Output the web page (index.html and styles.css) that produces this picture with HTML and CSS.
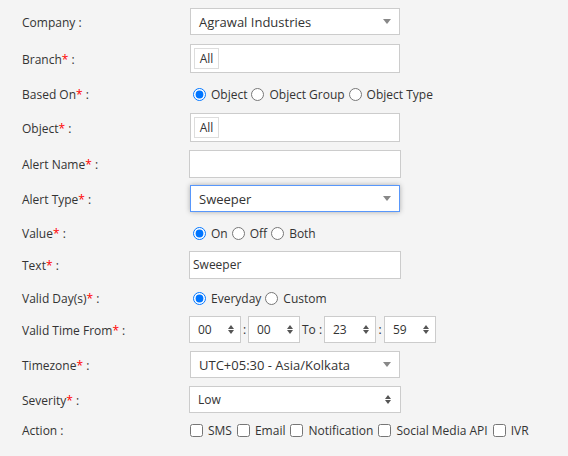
FILE: index.html
```html
<!DOCTYPE html>
<html>
<head>
<meta charset="utf-8">
<link rel="stylesheet" href="styles.css">
</head>
<body>
<div class="form">
  <div class="row h27 mt8">
    <div class="lbl">Company :</div>
    <div class="s2"><span>Agrawal Industries</span><svg class="caret" width="8" height="5" viewBox="0 0 8 5"><polygon points="0,0 8,0 4,5"/></svg></div>
  </div>
  <div class="row h29 mt9">
    <div class="lbl">Branch<span class="req">*</span> :</div>
    <div class="tagbox"><span class="tag">All</span></div>
  </div>
  <div class="row h26 mt8">
    <div class="lbl">Based On<span class="req">*</span> :</div>
    <div class="opts radios">
      <input type="radio" name="b" checked><span class="opt">Object</span>
      <input type="radio" name="b"><span class="opt">Object Group</span>
      <input type="radio" name="b"><span class="opt">Object Type</span>
    </div>
  </div>
  <div class="row h29 mt6">
    <div class="lbl">Object<span class="req">*</span> :</div>
    <div class="tagbox"><span class="tag">All</span></div>
  </div>
  <div class="row h27 mt8">
    <div class="lbl">Alert Name<span class="req">*</span> :</div>
    <div class="inp"></div>
  </div>
  <div class="row h27 mt8">
    <div class="lbl">Alert Type<span class="req">*</span> :</div>
    <div class="s2 focus"><span>Sweeper</span><svg class="caret" width="8" height="5" viewBox="0 0 8 5"><polygon points="0,0 8,0 4,5"/></svg></div>
  </div>
  <div class="row h26 mt8">
    <div class="lbl">Value<span class="req">*</span> :</div>
    <div class="opts radios">
      <input type="radio" name="v" checked><span class="opt">On</span>
      <input type="radio" name="v"><span class="opt">Off</span>
      <input type="radio" name="v"><span class="opt">Both</span>
    </div>
  </div>
  <div class="row h27 mt5">
    <div class="lbl">Text<span class="req">*</span> :</div>
    <div class="inp">Sweeper</div>
  </div>
  <div class="row h26 mt7">
    <div class="lbl">Valid Day(s)<span class="req">*</span> :</div>
    <div class="opts radios">
      <input type="radio" name="d" checked><span class="opt">Everyday</span>
      <input type="radio" name="d"><span class="opt">Custom</span>
    </div>
  </div>
  <div class="row h27 mt5">
    <div class="lbl">Valid Time From<span class="req">*</span> :</div>
    <div class="time">
      <div class="nsel tsel"><span>00</span><svg class="spin" width="6" height="9" viewBox="0 0 6 9"><polygon points="0,4 3,0 6,4"/><polygon points="0,5 6,5 3,9"/></svg></div>
      <span class="sep">:</span>
      <div class="nsel tsel"><span>00</span><svg class="spin" width="6" height="9" viewBox="0 0 6 9"><polygon points="0,4 3,0 6,4"/><polygon points="0,5 6,5 3,9"/></svg></div>
      <span class="to">To :</span>
      <div class="nsel tsel"><span>23</span><svg class="spin" width="6" height="9" viewBox="0 0 6 9"><polygon points="0,4 3,0 6,4"/><polygon points="0,5 6,5 3,9"/></svg></div>
      <span class="sep sep2">:</span>
      <div class="nsel tsel"><span>59</span><svg class="spin" width="6" height="9" viewBox="0 0 6 9"><polygon points="0,4 3,0 6,4"/><polygon points="0,5 6,5 3,9"/></svg></div>
    </div>
  </div>
  <div class="row h27 mt8">
    <div class="lbl">Timezone<span class="req">*</span> :</div>
    <div class="s2"><span>UTC+05:30 - Asia/Kolkata</span><svg class="caret" width="8" height="5" viewBox="0 0 8 5"><polygon points="0,0 8,0 4,5"/></svg></div>
  </div>
  <div class="row h27 mt8">
    <div class="lbl">Severity<span class="req">*</span> :</div>
    <div class="nsel wide"><span>Low</span><svg class="spin" width="6" height="9" viewBox="0 0 6 9"><polygon points="0,4 3,0 6,4"/><polygon points="0,5 6,5 3,9"/></svg></div>
  </div>
  <div class="row h26 mt4">
    <div class="lbl">Action :</div>
    <div class="opts checks">
      <input type="checkbox"><span class="opt">SMS</span>
      <input type="checkbox"><span class="opt">Email</span>
      <input type="checkbox"><span class="opt">Notification</span>
      <input type="checkbox"><span class="opt">Social Media API</span>
      <input type="checkbox"><span class="opt">IVR</span>
    </div>
  </div>
</div>
</body>
</html>
```
FILE: styles.css
```css
html, body {
  margin: 0;
  padding: 0;
  background: #f4f4f4;
}
body {
  font-family: "Open Sans", "Noto Sans", sans-serif;
  font-size: 12px;
  color: #333;
}
.form {
  display: flex;
  flex-direction: column;
}
.row {
  display: flex;
  align-items: center;
}
.h26 { height: 26px; }
.h27 { height: 27px; }
.h29 { height: 29px; }
.mt4 { margin-top: 4px; }
.mt5 { margin-top: 5px; }
.mt6 { margin-top: 6px; }
.mt7 { margin-top: 7px; }
.mt8 { margin-top: 8px; }
.mt9 { margin-top: 9px; }
.lbl {
  width: 168px;
  padding-left: 22px;
  flex: none;
  white-space: nowrap;
  padding-top: 1px;
}
.req { color: #f00; }
.s2 {
  box-sizing: border-box;
  width: 210px;
  height: 27px;
  background: #fff;
  border: 1px solid #ccc;
  display: flex;
  align-items: center;
  justify-content: space-between;
  padding: 0 8px 0 8px;
  font-size: 13px;
}
.s2.focus {
  border-color: #5897fb;
  box-shadow: 0 0 5px rgba(0, 0, 0, 0.3);
}
.caret { fill: #888; flex: none; }
.tagbox {
  box-sizing: border-box;
  width: 210px;
  height: 29px;
  background: #fff;
  border: 1px solid #ccc;
  display: flex;
  align-items: center;
  padding-left: 3px;
}
.tag {
  box-sizing: border-box;
  height: 21px;
  width: 25px;
  border: 1px solid #ddd;
  display: flex;
  align-items: center;
  justify-content: center;
  font-size: 12px;
}
.inp {
  box-sizing: border-box;
  width: 212px;
  height: 28px;
  margin-left: -1px;
  background: #fff;
  border: 1px solid #ccc;
  display: flex;
  align-items: center;
  padding-left: 3px;
}
.nsel {
  box-sizing: border-box;
  height: 27px;
  background: #fff;
  border: 1px solid #ccc;
  display: flex;
  align-items: center;
  justify-content: space-between;
  padding-left: 8px;
}
.nsel.wide {
  width: 212px;
  margin-left: -1px;
  padding-right: 9px;
}
.tsel {
  width: 52px;
  padding-right: 6px;
}
.spin { fill: #555; flex: none; }
.time {
  display: flex;
  align-items: center;
  margin-left: -1px;
}
.sep {
  width: 7px;
  text-align: center;
}
.sep2 { width: 8px; }
.to {
  width: 24px;
  text-align: center;
}
.opts {
  display: flex;
  align-items: center;
  white-space: nowrap;
}
.opts input {
  margin: 0;
  width: 13px;
  height: 13px;
  flex: none;
}
.radios { margin-left: 3px; }
.opt {
  margin-left: 5px;
  margin-right: 5px;
}
.radios .opt { margin-right: 4px; }
```
